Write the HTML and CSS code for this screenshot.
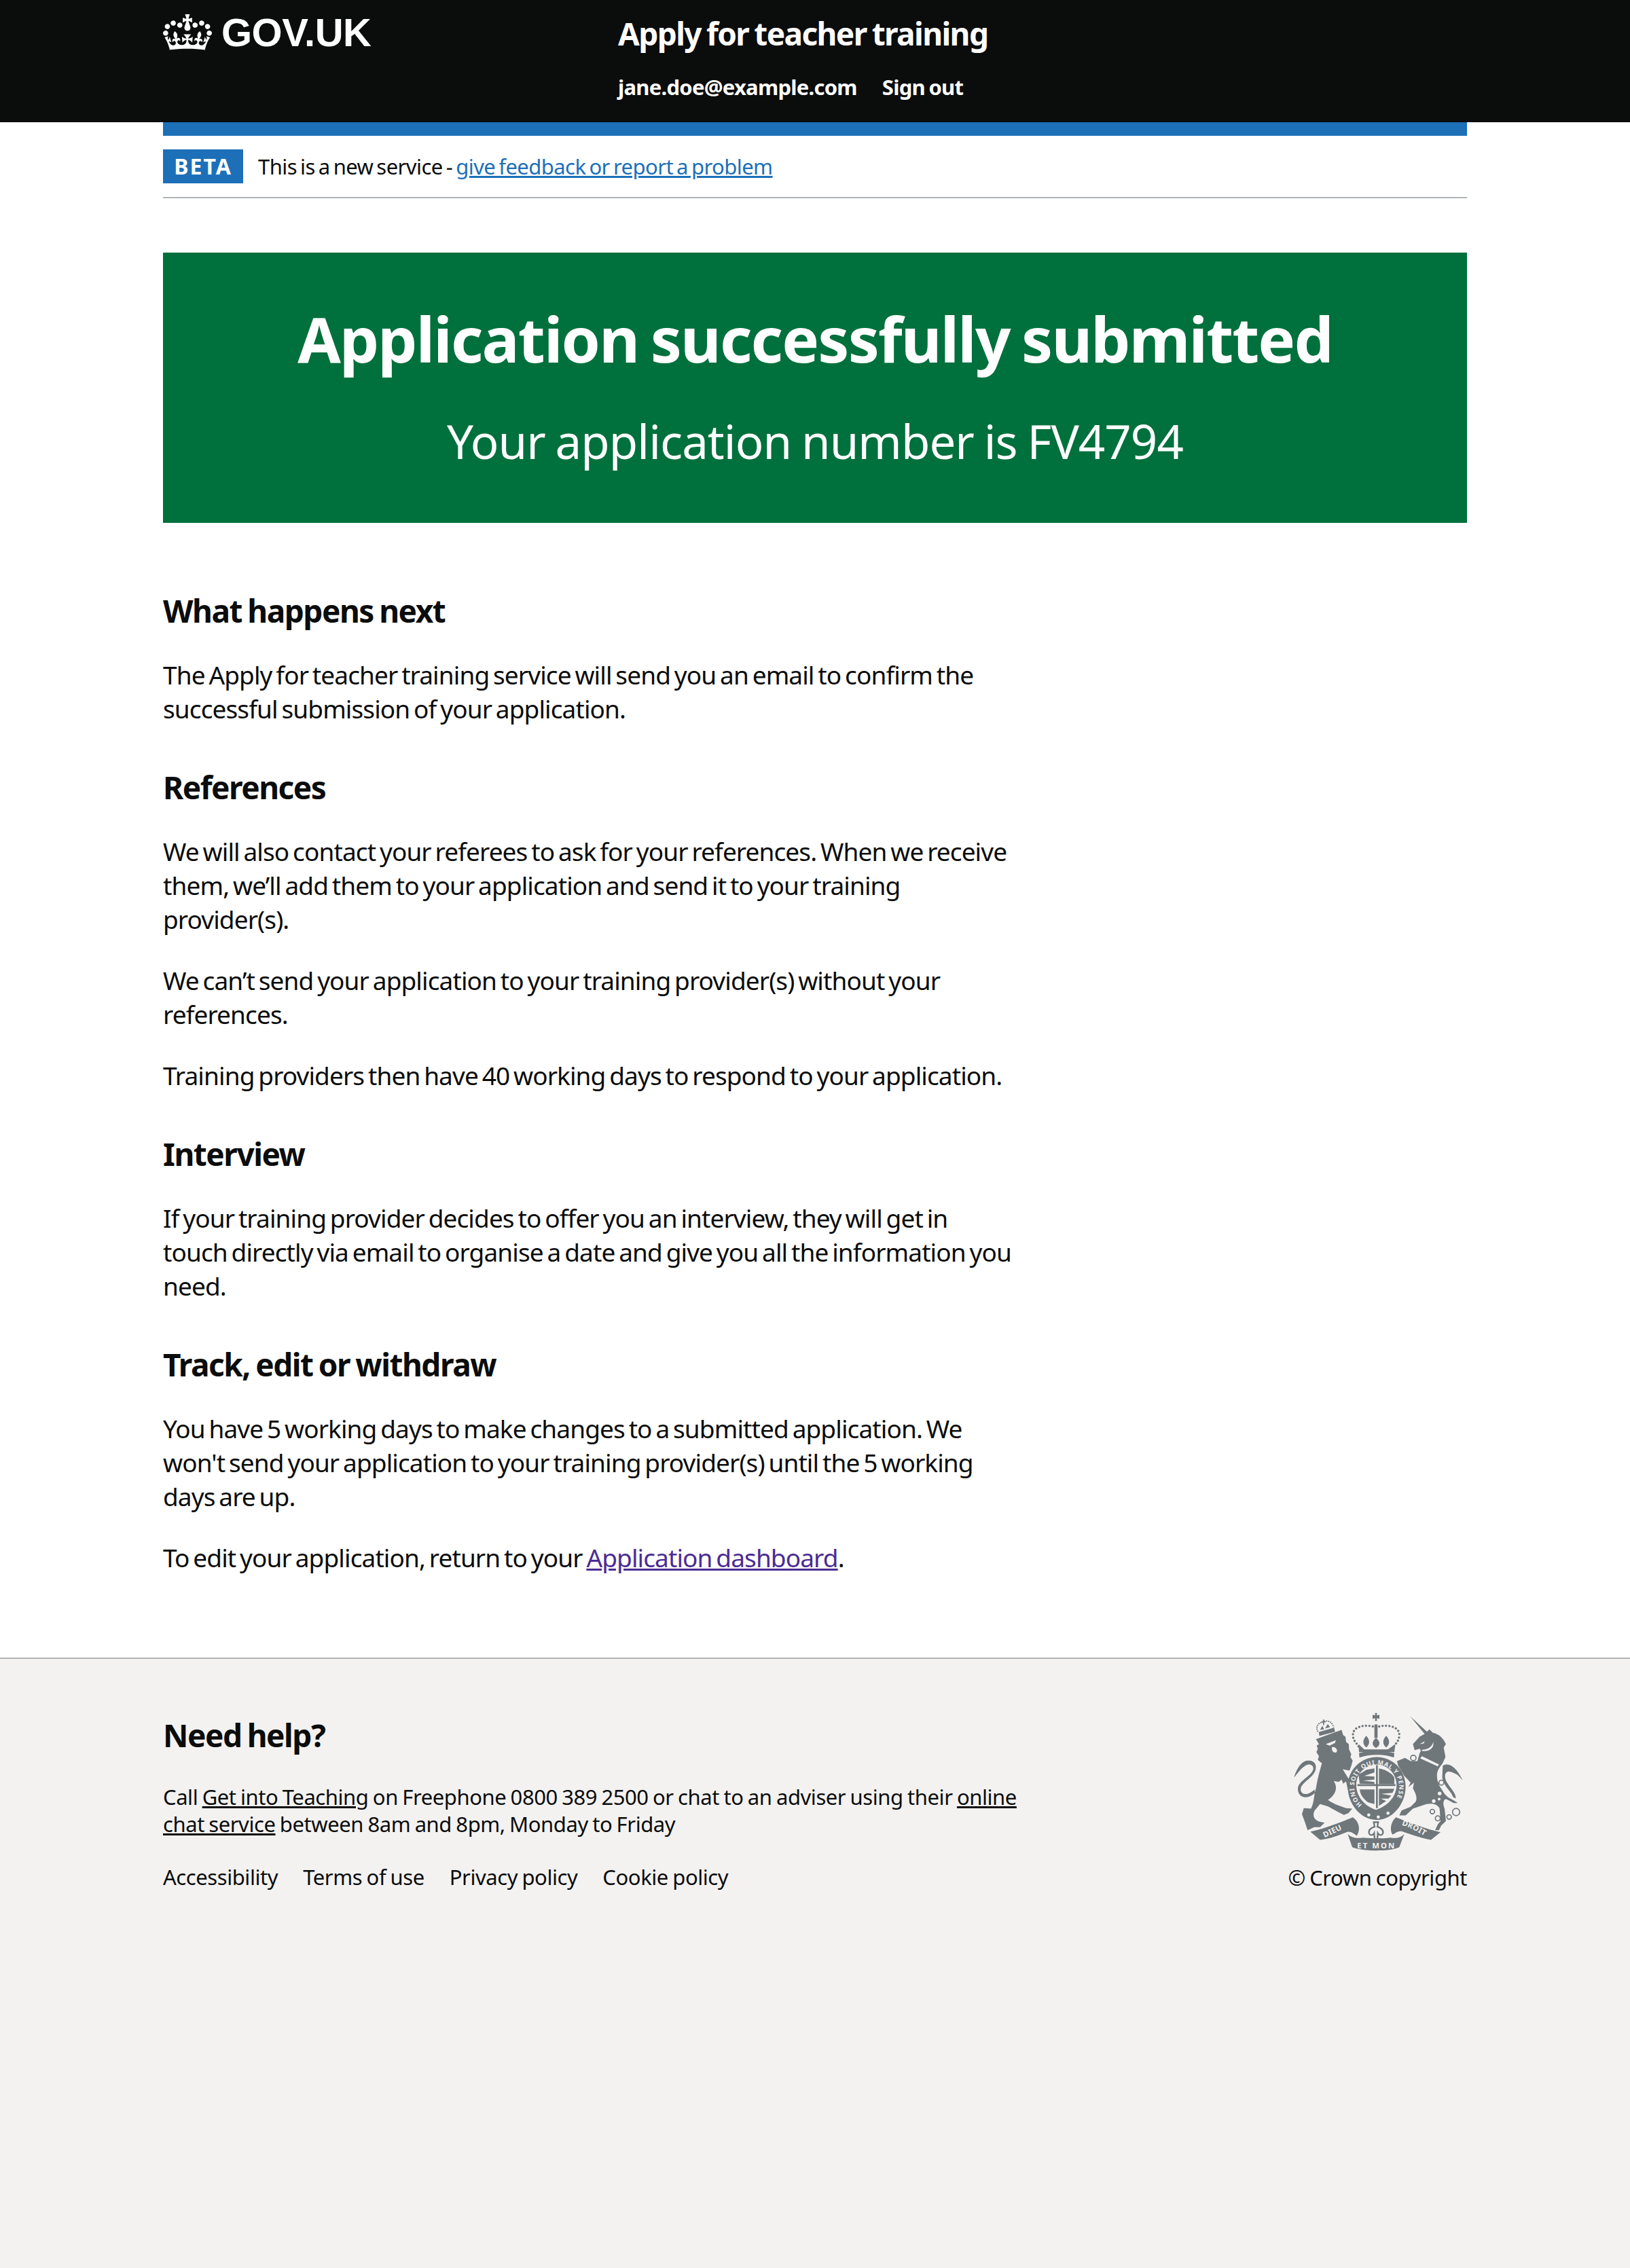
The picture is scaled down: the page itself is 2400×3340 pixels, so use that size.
FILE: index.html
```html
<!DOCTYPE html>
<html lang="en">
<head>
<meta charset="utf-8">
<title>Application successfully submitted</title>
<link rel="stylesheet" href="styles.css">
</head>
<body>
<header class="header">
  <div class="wrap header-inner">
    <a class="logo" href="#">
      <svg class="crown" viewBox="0 0 132 97" aria-hidden="true"><path fill="currentColor" fill-rule="evenodd" d="M25 30.2c3.5 1.5 7.7-.2 9.1-3.7 1.5-3.6-.2-7.8-3.9-9.2-3.6-1.4-7.6.3-9.1 3.9-1.4 3.5.3 7.5 3.9 9zM9 39.5c3.6 1.5 7.8-.2 9.2-3.7 1.5-3.6-.2-7.8-3.9-9.1-3.6-1.5-7.6.2-9.1 3.8-1.4 3.5.3 7.5 3.8 9zM4.4 57.2c3.5 1.5 7.7-.2 9.1-3.8 1.5-3.6-.2-7.7-3.9-9.1-3.5-1.5-7.6.3-9.1 3.8-1.4 3.5.3 7.6 3.9 9.1zm38.3-21.4c3.5 1.5 7.7-.2 9.1-3.8 1.5-3.6-.2-7.7-3.9-9.1-3.6-1.5-7.6.3-9.1 3.8-1.3 3.6.4 7.7 3.9 9.1zm64.4-5.6c-3.6 1.5-7.8-.2-9.1-3.7-1.5-3.6.2-7.8 3.8-9.2 3.6-1.4 7.7.3 9.2 3.9 1.3 3.5-.4 7.5-3.9 9zm15.9 9.3c-3.6 1.5-7.7-.2-9.1-3.7-1.5-3.6.2-7.8 3.7-9.1 3.6-1.5 7.7.2 9.2 3.8 1.5 3.5-.3 7.5-3.8 9zm4.7 17.7c-3.6 1.5-7.8-.2-9.2-3.8-1.5-3.6.2-7.7 3.9-9.1 3.6-1.5 7.7.3 9.2 3.8 1.3 3.5-.4 7.6-3.9 9.1zM89.3 35.8c-3.6 1.5-7.8-.2-9.2-3.8-1.4-3.6.2-7.7 3.9-9.1 3.6-1.5 7.7.3 9.2 3.8 1.4 3.6-.3 7.7-3.9 9.1zM69.7 17.7l8.9 4.7V9.3l-8.9 2.8c-.2-.3-.5-.6-.9-.9L72.4 0H59.6l3.5 11.2c-.3.3-.6.5-.9.9l-8.8-2.8v13.1l8.8-4.7c.3.3.6.7.9.9l-5 15.4v.1c-.2.8-.4 1.6-.4 2.4 0 4.1 3.1 7.5 7 8.1h.2c.3 0 .7.1 1 .1.4 0 .7 0 1-.1h.2c4-.6 7.1-4.1 7.1-8.1 0-.8-.1-1.7-.4-2.4V34l-5.1-15.4c.4-.2.7-.6 1-.9zM66 92.8c16.9 0 32.8 1.1 47.1 3.2 4-16.9 8.9-26.7 14-33.5l-9.6-3.4c1 4.9 1.1 7.2 0 10.2-1.5-1.4-3-4.3-4.2-8.7L108.6 76c2.8-2 5-3.2 7.5-3.3-4.4 9.4-10 11.9-13.6 11.2-4.3-.8-6.3-4.6-5.6-7.9 1-4.7 5.7-5.9 8-.5 4.3-8.7-3-11.4-7.6-8.8 7.1-7.2 7.9-13.5 2.1-21.1-8 6.1-8.1 12.3-4.5 20.8-4.7-5.4-12.1-2.5-9.5 6.2 3.4-5.2 7.9-2 7.2 3.1-.6 4.3-6.4 7.8-13.5 7.2-10.3-.9-10.9-8-11.2-13.8 2.5-.5 7.1 1.8 11 7.3L80.2 60c-4.1 4.4-8 5.3-12.3 5.4 1.4-4.4 8-11.6 8-11.6H55.5s6.4 7.2 7.9 11.6c-4.2-.1-8-1-12.3-5.4l1.4 16.4c3.9-5.5 8.5-7.7 10.9-7.3-.3 5.8-.9 12.8-11.1 13.8-7.2.6-12.9-2.9-13.5-7.2-.7-5 3.8-8.3 7.1-3.1 2.7-8.7-4.6-11.6-9.4-6.2 3.7-8.5 3.6-14.7-4.6-20.8-5.8 7.6-5 13.9 2.2 21.1-4.7-2.6-11.9.1-7.7 8.8 2.3-5.5 7.1-4.2 8.1.5.7 3.3-1.3 7.1-5.7 7.9-3.5.7-9-1.8-13.5-11.2 2.5.1 4.7 1.3 7.5 3.3l-4.7-15.4c-1.2 4.4-2.7 7.2-4.3 8.7-1.1-3-.9-5.3 0-10.2l-9.5 3.4c5 6.9 9.9 16.7 14 33.5 14.8-2.1 30.8-3.2 47.7-3.2z"/></svg>
      <span class="logotype">GOV.UK</span>
    </a>
    <div class="service">
      <a class="service-name" href="#">Apply for teacher training</a>
      <nav class="header-nav">
        <a href="#">jane.doe@example.com</a>
        <a href="#">Sign out</a>
      </nav>
    </div>
  </div>
</header>
<div class="wrap">
  <div class="blue-bar"></div>
  <div class="phase">
    <strong class="tag">BETA</strong>
    <span>This is a new service - <a class="link" href="#">give feedback or report a problem</a></span>
  </div>
  <main class="main">
    <div class="panel">
      <h1 class="panel-title">Application successfully submitted</h1>
      <div class="panel-body">Your application number is FV4794</div>
    </div>
    <div class="content">
      <h2>What happens next</h2>
      <p>The Apply for teacher training service will send you an email to confirm the successful submission of your application.</p>
      <h2>References</h2>
      <p>We will also contact your referees to ask for your references. When we receive them, we’ll add them to your application and send it to your training provider(s).</p>
      <p>We can’t send your application to your training provider(s) without your references.</p>
      <p>Training providers then have 40 working days to respond to your application.</p>
      <h2>Interview</h2>
      <p>If your training provider decides to offer you an interview, they will get in touch directly via email to organise a date and give you all the information you need.</p>
      <h2>Track, edit or withdraw</h2>
      <p>You have 5 working days to make changes to a submitted application. We won't send your application to your training provider(s) until the 5 working days are up.</p>
      <p>To edit your application, return to your <a class="visited" href="#">Application dashboard</a>.</p>
    </div>
  </main>
</div>
<footer class="footer">
  <div class="wrap footer-inner">
    <div class="footer-left">
      <h2 class="help-title">Need help?</h2>
      <p class="help">Call <a href="#">Get into Teaching</a> on Freephone 0800 389 2500 or chat to an adviser using their <a href="#">online chat service</a> between 8am and 8pm, Monday to Friday</p>
      <ul class="footer-links">
        <li><a href="#">Accessibility</a></li>
        <li><a href="#">Terms of use</a></li>
        <li><a href="#">Privacy policy</a></li>
        <li><a href="#">Cookie policy</a></li>
      </ul>
    </div>
    <div class="footer-right">
      <svg class="arms" viewBox="125 60 765 620" aria-hidden="true">
        <g fill="#6f777b">
          <path d="M232 183 L262 172 L345 142 L352 165 L362 172 L365 195 L377 205 L378 228 L388 250 L384 262 L394 278 L388 300 L380 322 L350 316 L372 352 C385 368 400 395 408 418 L395 425 L372 405 L365 370 L352 380 L345 362 L332 372 L310 368 C330 395 320 430 285 452 C310 470 340 480 365 488 L392 490 L375 510 L355 518 L330 505 L285 480 L250 470 L225 500 C215 525 225 540 248 548 L270 552 L250 572 L225 572 L195 585 L185 555 L170 515 L178 488 L210 490 C225 460 222 430 232 400 C240 350 250 320 258 290 L240 275 L245 258 L234 240 L240 225 L235 212 L245 205 Z"/>
          <path d="M135 352 C145 320 165 280 195 278 C222 274 240 295 228 325 C215 355 170 375 165 400 C160 425 190 440 225 405 L228 420 C190 455 150 440 152 400 C155 365 215 345 220 315 C222 295 200 290 185 300 C165 312 150 335 135 352 Z"/>
          <path d="M244 152 L312 132 L316 150 L247 169 Z"/>
          <path d="M240 150 C228 125 245 110 262 108 C275 100 300 98 310 130" fill="none" stroke="#6f777b" stroke-width="6" stroke-dasharray="5 4"/>
          <path d="M263 96 h5 v8 h7 v5 h-7 v12 h-5 v-12 h-7 v-5 h7 Z M250 142 l10 -18 l8 16 Z M272 136 l12 -20 l10 14 Z"/>
          <path d="M492 68 h10 l-2 10 l12 -3 v18 l-12 -3 l2 12 h-10 l2 -12 l-12 3 v-18 l12 3 Z"/>
          <path d="M490 118 h14 v60 h-14 Z"/>
          <path d="M497 178 C515 190 520 210 497 222 C475 210 480 190 497 178 Z M454 168 C470 185 472 205 454 220 C436 205 438 185 454 168 Z M542 168 C558 185 560 205 542 220 C524 205 526 185 542 168 Z"/>
          <path d="M420 205 L445 228 L550 228 L582 205 L578 240 L422 240 Z"/>
          <path d="M422 245 C470 232 530 232 578 245 L576 264 C530 248 470 248 424 264 Z"/>
          <path d="M497 132 C470 118 395 118 395 165 C395 190 412 200 422 218 M497 132 C525 118 600 118 600 165 C600 190 585 200 575 218" fill="none" stroke="#6f777b" stroke-width="10" stroke-linecap="round" stroke-dasharray="0.1 15"/>
          <path fill-rule="evenodd" d="M500 262 C570 262 628 320 628 392 C628 470 570 540 500 540 C430 540 372 470 372 392 C372 320 430 262 500 262 Z M500 295 C448 295 410 338 410 385 C410 440 450 480 497 495 C545 480 588 440 588 385 C588 338 550 295 500 295 Z"/>
          <path d="M497 298 h8 v190 h-8 Z M415 382 h168 v8 h-168 Z"/>
          <path d="M420 340 L455 318 L490 312 L490 330 L445 345 L490 348 L490 362 L440 366 L490 372 L490 382 L425 380 Z"/>
          <path d="M510 312 C540 318 565 332 578 352 L578 382 L510 382 Z"/>
          <path d="M425 405 L490 405 L490 470 L462 462 C440 445 428 430 425 405 Z"/>
          <path d="M510 402 L578 402 L570 420 L520 425 L565 432 L552 446 L518 446 L542 456 L510 478 Z"/>
          <path d="M648 82 L722 150 L733 140 L748 155 C775 160 795 180 806 205 L796 220 L804 262 L790 292 C772 315 760 330 770 370 C778 395 785 400 800 425 L815 440 C825 445 838 452 858 465 L840 465 L812 450 C795 440 790 470 800 490 L806 545 L785 565 L775 585 L758 585 L770 560 L782 545 L778 490 C770 470 745 465 720 470 L660 490 L628 520 L600 520 L610 498 L650 482 L672 460 C682 440 670 420 660 400 L665 375 L640 395 L650 375 L622 345 L595 300 L590 280 L625 266 L650 280 L680 280 L690 245 L695 235 L690 225 L668 232 L660 205 L690 172 L712 160 Z"/>
          <path d="M792 300 C815 285 850 300 880 365 C865 350 860 340 845 335 C825 325 805 320 802 345 C800 380 850 410 850 445 L838 440 C830 410 785 385 790 340 Z"/>
          <path d="M207 592 C280 575 340 550 395 528 C420 545 432 580 412 610 C400 600 385 590 372 592 C340 605 290 625 250 628 Z"/>
          <path d="M372 602 C395 625 420 620 440 618 C490 622 530 622 560 618 C580 620 600 625 622 602 L600 660 C560 680 440 680 392 660 Z"/>
          <path d="M585 528 C640 550 720 580 782 594 L740 628 C690 620 640 600 610 590 C590 588 575 605 570 605 C555 580 565 545 585 528 Z"/>
        </g>
        <path d="M487 550 h20 l-4 20 C518 575 532 585 527 600 C522 610 510 608 505 598 L503 622 L497 626 L491 622 L489 598 C484 608 472 610 467 600 C462 585 476 575 491 570 Z" fill="#f3f2f1" stroke="#6f777b" stroke-width="7"/>
        <g fill="none" stroke="#6f777b" stroke-width="5">
          <circle cx="662" cy="266" r="12"/>
          <circle cx="650" cy="348" r="12"/>
          <circle cx="786" cy="375" r="11"/>
          <circle cx="746" cy="503" r="10"/>
          <circle cx="770" cy="533" r="11"/>
          <circle cx="820" cy="527" r="10"/>
          <circle cx="851" cy="505" r="16"/>
        </g>
        <g fill="#f3f2f1">
          <circle cx="778" cy="423" r="8"/><circle cx="752" cy="457" r="8"/><circle cx="776" cy="448" r="6"/>
          <circle cx="465" cy="518" r="7"/><circle cx="507" cy="527" r="7"/><circle cx="550" cy="510" r="7"/>
          <path d="M275 205 L320 188 L316 200 L292 212 Z M303 218 C325 215 330 240 320 242 C305 245 300 230 303 218 Z"/>
          <path d="M690 205 L712 192 L708 202 Z M700 230 C730 228 745 215 750 195 C755 220 735 240 700 235 Z"/>
          <path d="M700 258 L775 295 L770 303 L692 268 Z"/>
        </g>
        <g>
          <path id="garterRing" d="M436 472 A100 100 0 1 1 564 472" fill="none"/>
          <text class="arms-small"><textPath href="#garterRing" textLength="448" lengthAdjust="spacing">HONI SOIT QUI MAL Y PENSE</textPath></text>
          <path id="ribLeft" d="M270 618 C310 600 340 585 372 570" fill="none"/>
          <path id="ribRight" d="M610 562 C650 575 690 595 728 622" fill="none"/>
          <text class="arms-ribbon"><textPath href="#ribLeft">DIEU</textPath></text>
          <text class="arms-ribbon"><textPath href="#ribRight">DROIT</textPath></text>
          <text class="arms-ribbon" x="414" y="667" textLength="166" lengthAdjust="spacing">ET MON</text>
        </g>
      </svg>
      <div class="copyright">© Crown copyright</div>
    </div>
  </div>
</footer>
</body>
</html>
```
FILE: styles.css
```css
* { box-sizing: border-box; }
html, body { margin: 0; padding: 0; }
body {
  min-height: 3340px;
  display: flex;
  flex-direction: column;
  font-family: "Noto Sans", sans-serif;
  font-size: 37px;
  line-height: 50px;
  color: #0b0c0c;
  background: #fff;
}
.wrap { width: 1920px; margin: 0 auto; }
.header { background: #0b0c0c; height: 180px; color: #fff; }
.header-inner { display: flex; }
.header a { color: #fff; text-decoration: none; }
.logo { width: 670px; display: flex; align-items: flex-start; gap: 14px; padding-top: 21px; }
.crown { width: 72px; height: 53px; display: block; }
.logotype { font-family: "Liberation Sans", sans-serif; font-weight: 700; font-size: 58px; line-height: 60px; letter-spacing: -0.5px; margin-top: -3px; }
.service { padding-top: 19px; }
.service-name { display: block; font-size: 46px; line-height: 60px; font-weight: 700; letter-spacing: -0.035em; word-spacing: -0.05em; }
.header-nav { display: flex; gap: 37px; margin-top: 29px; font-size: 31px; line-height: 40px; font-weight: 700; letter-spacing: -0.024em; word-spacing: -0.06em; }
.blue-bar { height: 20px; background: #1d70b8; }
.phase { height: 92px; padding-top: 20px; border-bottom: 2px solid #b1b4b6; display: flex; align-items: flex-start; gap: 22px; font-size: 31px; line-height: 50px; letter-spacing: -0.018em; word-spacing: -0.08em; }
.tag { display: block; width: 118px; height: 50px; background: #1d70b8; color: #fff; text-align: center; font-size: 32px; line-height: 50px; letter-spacing: 2px; word-spacing: 0; font-weight: 700; }
.link { color: #1d70b8; }
.main { padding-top: 80px; padding-bottom: 121px; }
.panel { height: 398px; background: #00703c; color: #fff; text-align: center; padding-top: 77px; }
.panel-title { margin: 0 0 50px; font-size: 92px; line-height: 100px; font-weight: 700; letter-spacing: -0.02em; word-spacing: -0.05em; }
.panel-body { font-size: 69px; line-height: 100px; letter-spacing: -0.014em; word-spacing: -0.03em; }
.content { width: 1255px; padding-top: 99px; }
.content h2 { margin: 0 0 40px; font-size: 46px; line-height: 60px; font-weight: 700; letter-spacing: -0.032em; word-spacing: -0.05em; }
.content p { margin: 0 0 40px; letter-spacing: -0.024em; word-spacing: -0.08em; }
.content p + h2 { margin-top: 60px; }
.content p:last-child { margin-bottom: 0; }
.visited { color: #4c2c92; }
.main { padding-bottom: 122px; }
.footer { flex: 1; background: #f3f2f1; border-top: 2px solid #b1b4b6; padding-top: 80px; font-size: 31px; line-height: 40px; letter-spacing: -0.014em; word-spacing: -0.04em; }
.footer-inner { display: flex; justify-content: space-between; }
.footer a { color: #0b0c0c; }
.footer-left { width: 1260px; }
.help-title { margin: 2px 0 41px; font-size: 46px; line-height: 60px; font-weight: 700; letter-spacing: -0.032em; word-spacing: -0.05em; }
.help { margin: 0 0 38px; }
.footer-links { list-style: none; margin: 0; padding: 0; display: flex; gap: 37px; }
.footer-links a { text-decoration: none; }
.footer-right { display: flex; flex-direction: column; align-items: flex-end; }
.arms { width: 255px; height: 207px; display: block; margin-top: -3px; margin-right: 3px; }
.copyright { margin-top: 18px; white-space: nowrap; }
.arms-small { fill: #f3f2f1; font-family: "Noto Sans", sans-serif; font-weight: 700; font-size: 27px; letter-spacing: 0; word-spacing: 0; }
.arms-ribbon { fill: #f3f2f1; font-family: "Noto Sans", sans-serif; font-weight: 700; font-size: 34px; letter-spacing: 1px; word-spacing: 0; }
```
